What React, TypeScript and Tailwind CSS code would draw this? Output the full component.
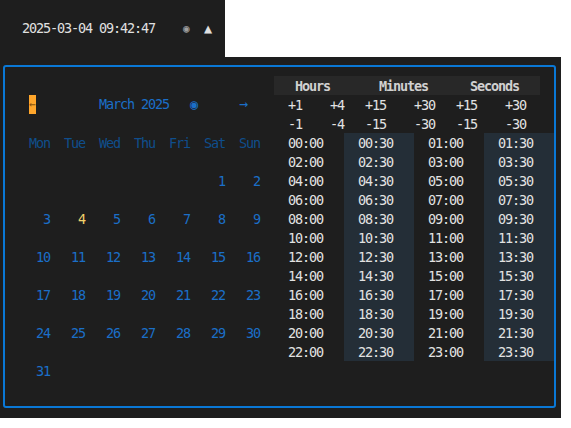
import React from 'react'

const weeks: (number | null)[][] = [
  [null, null, null, null, null, 1, 2],
  [3, 4, 5, 6, 7, 8, 9],
  [10, 11, 12, 13, 14, 15, 16],
  [17, 18, 19, 20, 21, 22, 23],
  [24, 25, 26, 27, 28, 29, 30],
  [31, null, null, null, null, null, null],
]

const dayNames = ['Mon', 'Tue', 'Wed', 'Thu', 'Fri', 'Sat', 'Sun']

const pad = (n: number) => String(n).padStart(2, '0')

const timeCols = [
  Array.from({ length: 12 }, (_, i) => `${pad(i * 2)}:00`),
  Array.from({ length: 12 }, (_, i) => `${pad(i * 2)}:30`),
  Array.from({ length: 12 }, (_, i) => `${pad(i * 2 + 1)}:00`),
  Array.from({ length: 12 }, (_, i) => `${pad(i * 2 + 1)}:30`),
]

function Calendar() {
  return (
    <div className="w-[245px] pt-[9px] ml-[17px]">
      {/* month header */}
      <div className="h-[38px] flex items-end">
        <div className="h-[19px] flex items-center w-full">
          <span className="ml-[7px] w-[7px] h-[19px] bg-[#ffa62b] text-[#8a5410] text-[11px] flex items-center justify-center overflow-hidden tracking-normal">
            ←
          </span>
          <span className="ml-[63px] w-[70px] text-[#1b6fc8]">March 2025</span>
          <span className="ml-[21px] w-[7px] text-[#1b6fc8]">◉</span>
          <span className="ml-[42px] w-[7px] text-[#1b6fc8] text-[15px] tracking-normal">→</span>
        </div>
      </div>
      {/* day names */}
      <div className="h-[38px] flex items-end">
        {dayNames.map((d) => (
          <div key={d} className="w-[35px] h-[19px] text-right pr-[7px] text-[#0f4e8c]">
            {d}
          </div>
        ))}
      </div>
      {weeks.map((w, i) => (
        <div key={i} className="h-[38px] flex items-end">
          {w.map((d, j) => (
            <div
              key={j}
              className={`w-[35px] h-[19px] text-right pr-[7px] ${d === 4 ? 'text-[#f2d36b]' : 'text-[#1b6fc8]'}`}
            >
              {d ?? ''}
            </div>
          ))}
        </div>
      ))}
    </div>
  )
}

function TimePicker() {
  return (
    <div className="w-[280px] ml-[7px] pt-[9px] text-[#e2e2e2]">
      <div className="w-[266px] h-[19px] bg-[#282828] flex font-bold text-[#d0d0d0]">
        <span className="ml-[21px] w-[84px]">Hours</span>
        <span className="w-[91px]">Minutes</span>
        <span>Seconds</span>
      </div>
      <div className="h-[19px] flex pl-[14px]">
        <span className="w-[42px]">+1</span>
        <span className="w-[35px]">+4</span>
        <span className="w-[49px]">+15</span>
        <span className="w-[42px]">+30</span>
        <span className="w-[49px]">+15</span>
        <span>+30</span>
      </div>
      <div className="h-[19px] flex pl-[14px]">
        <span className="w-[42px]">-1</span>
        <span className="w-[35px]">-4</span>
        <span className="w-[49px]">-15</span>
        <span className="w-[42px]">-30</span>
        <span className="w-[49px]">-15</span>
        <span>-30</span>
      </div>
      <div className="flex">
        {timeCols.map((col, i) => (
          <div key={i} className={`w-[70px] ${i % 2 === 1 ? 'bg-[#242e37]' : ''}`}>
            {col.map((t) => (
              <div key={t} className="h-[19px] pl-[14px]">
                {t}
              </div>
            ))}
          </div>
        ))}
      </div>
    </div>
  )
}

export default function App() {
  return (
    <div
      className="w-[571px] h-[428px] bg-white overflow-hidden text-[13.5px] leading-[21px] tracking-[-1.13px] whitespace-pre"
      style={{ fontFamily: '"DejaVu Sans Mono", "Liberation Mono", monospace' }}
    >
      {/* top clock bar */}
      <div className="w-[225px] h-[57px] bg-[#1e1e1e] flex items-center text-[#e0e0e0]">
        <span className="ml-[22px] w-[161px]">2025-03-04 09:42:47</span>
        <span className="w-[21px] text-[#a0a0a0] text-[11px] tracking-normal">◉</span>
        <span className="w-[7px] tracking-normal">▲</span>
      </div>
      {/* panel */}
      <div className="w-[561px] h-[361px] bg-[#1e1e1e] pt-[8px] pl-[3px]">
        <div className="w-[553px] h-[343px] border-2 border-[#0a78d6] rounded-[3px] flex">
          <Calendar />
          <TimePicker />
        </div>
      </div>
    </div>
  )
}
